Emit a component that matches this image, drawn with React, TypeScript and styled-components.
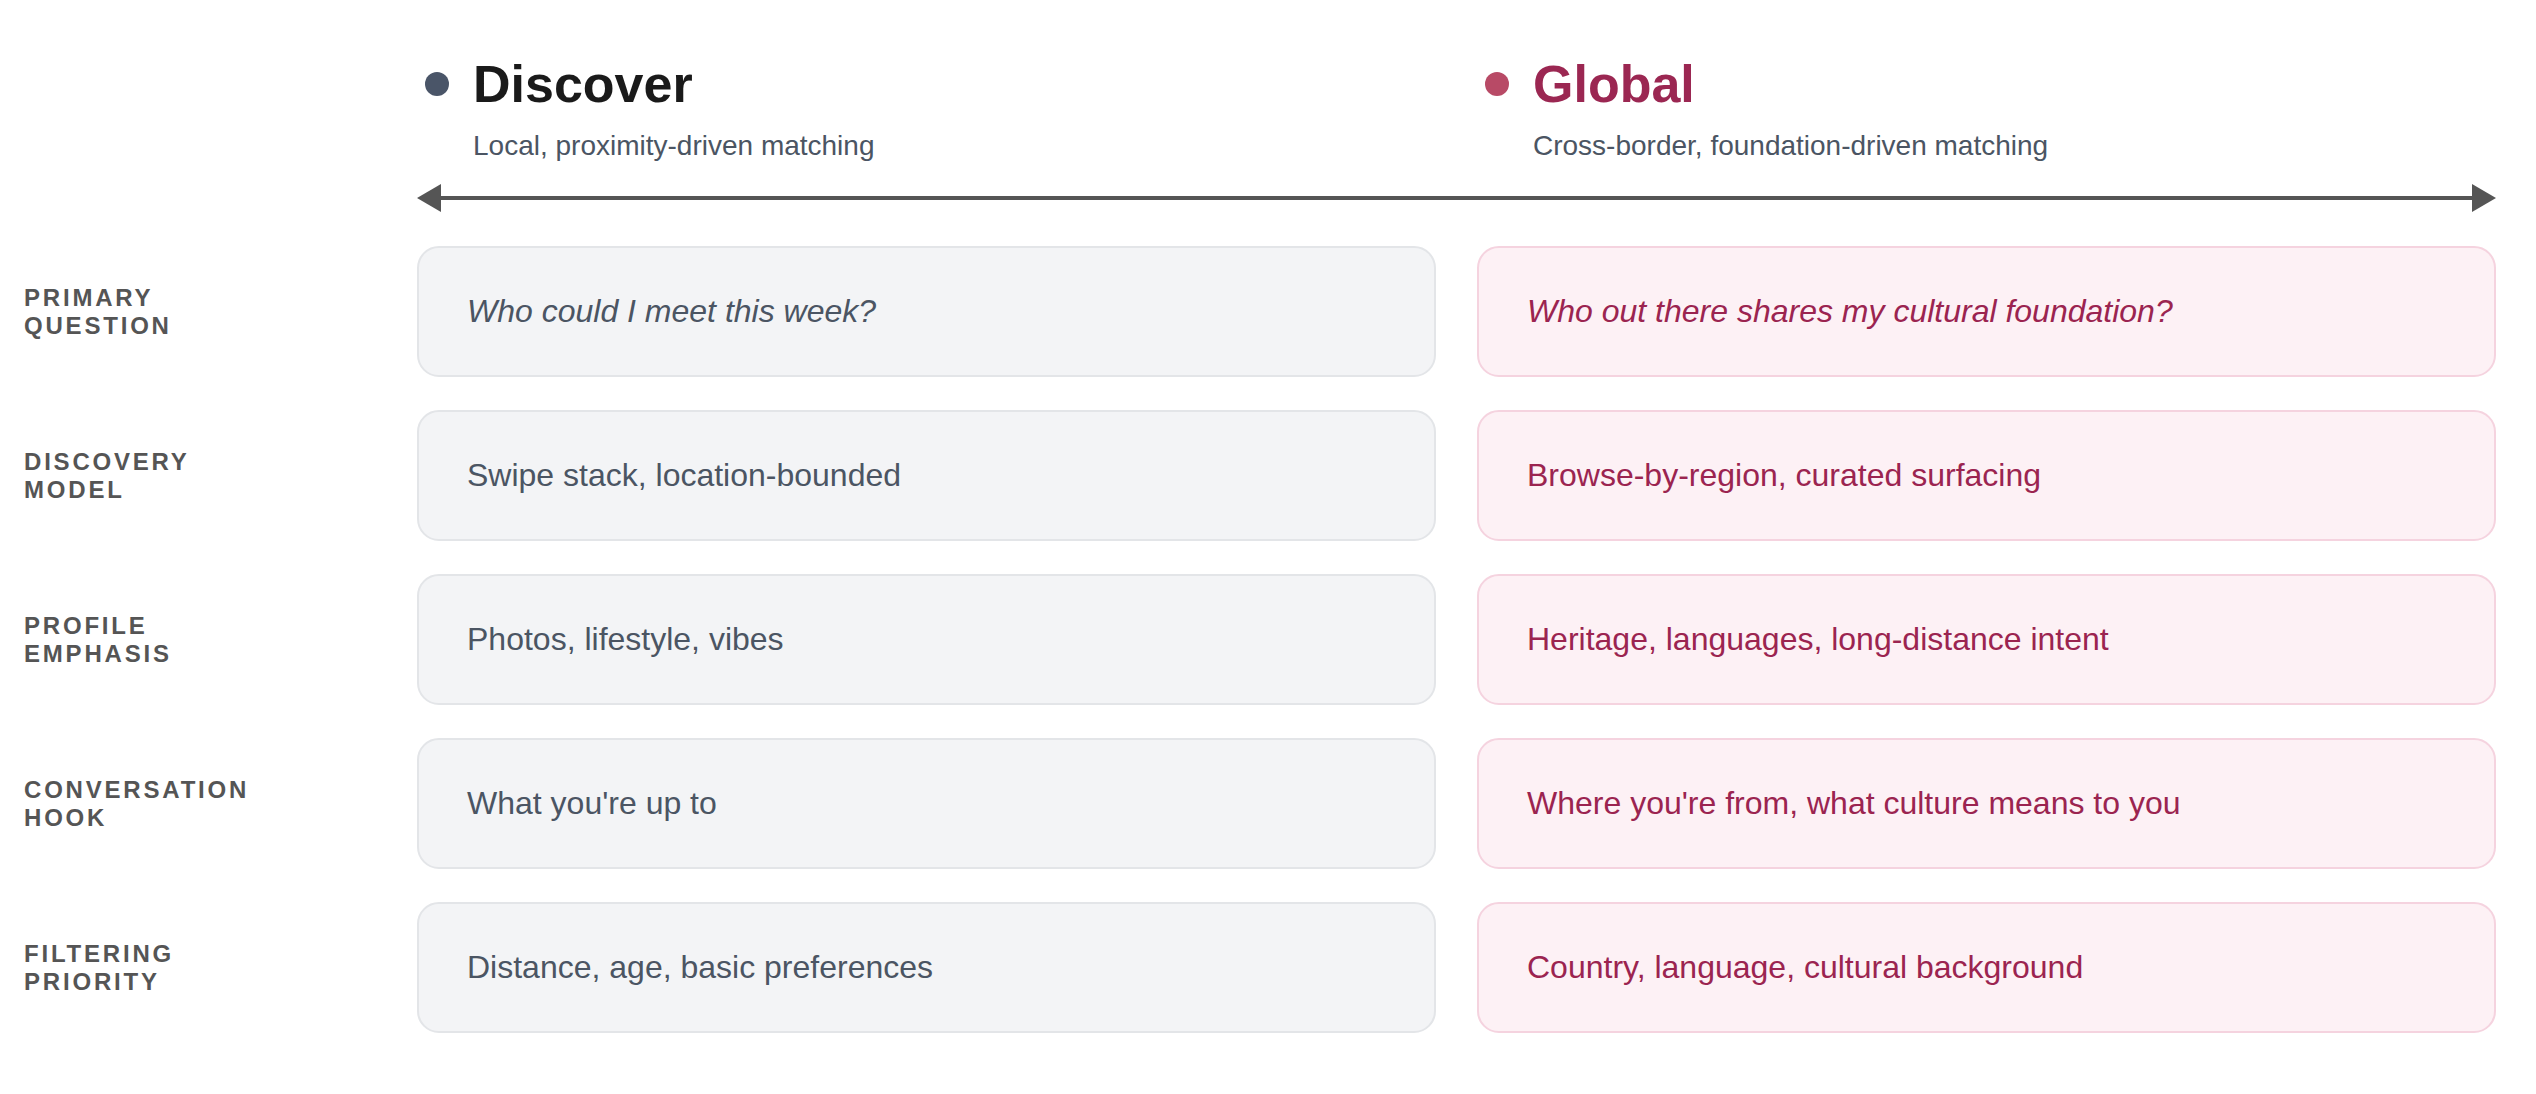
import React from "react";
import styled, { createGlobalStyle } from "styled-components";

const Global = createGlobalStyle`
  body { margin: 0; background: #fff; font-family: "Liberation Sans", Arial, sans-serif; }
`;

const Page = styled.div`
  padding: 46px 40px 40px 24px;
  display: grid;
  grid-template-columns: 352px 1fr 1fr;
  column-gap: 41px;
  row-gap: 33px;
`;

const Head = styled.div`
  padding-left: 8px;
`;
const TitleRow = styled.div`
  display: flex;
  align-items: center;
  gap: 24px;
`;
const Dot = styled.span<{ $c: string }>`
  width: 24px;
  height: 24px;
  border-radius: 50%;
  background: ${(p) => p.$c};
`;
const Title = styled.h1<{ $c: string }>`
  margin: 0;
  font-size: 52px;
  line-height: 76px;
  font-weight: 700;
  color: ${(p) => p.$c};
`;
const Sub = styled.div`
  margin: 8px 0 0 48px;
  font-size: 28px;
  color: #4b5563;
`;

const ArrowWrap = styled.div`
  grid-column: 2 / 4;
  height: 30px;
  margin: -12px 0 0;
`;

const Label = styled.div`
  display: flex;
  align-items: center;
  font-size: 24px;
  font-weight: 700;
  letter-spacing: 2.8px;
  line-height: 28px;
  color: #555;
  text-transform: uppercase;
`;

const Card = styled.div<{ $pink?: boolean; $italic?: boolean }>`
  height: 131px;
  box-sizing: border-box;
  border-radius: 22px;
  border: 2px solid ${(p) => (p.$pink ? "#f5d3df" : "#e3e5e8")};
  background: ${(p) => (p.$pink ? "#fdf1f5" : "#f3f4f6")};
  color: ${(p) => (p.$pink ? "#9b2450" : "#4b5563")};
  font-style: ${(p) => (p.$italic ? "italic" : "normal")};
  display: flex;
  align-items: center;
  padding: 0 48px;
  font-size: 32px;
`;

const rows = [
  ["Primary", "Question", "Who could I meet this week?", "Who out there shares my cultural foundation?", true],
  ["Discovery", "Model", "Swipe stack, location-bounded", "Browse-by-region, curated surfacing", false],
  ["Profile", "Emphasis", "Photos, lifestyle, vibes", "Heritage, languages, long-distance intent", false],
  ["Conversation", "Hook", "What you're up to", "Where you're from, what culture means to you", false],
  ["Filtering", "Priority", "Distance, age, basic preferences", "Country, language, cultural background", false],
] as const;

export default function App() {
  return (
    <>
      <Global />
      <Page>
        <div />
        <Head>
          <TitleRow>
            <Dot $c="#4a5568" />
            <Title $c="#1a1a1a">Discover</Title>
          </TitleRow>
          <Sub>Local, proximity-driven matching</Sub>
        </Head>
        <Head>
          <TitleRow>
            <Dot $c="#b84a66" />
            <Title $c="#9b2752">Global</Title>
          </TitleRow>
          <Sub>Cross-border, foundation-driven matching</Sub>
        </Head>
        <div />
        <ArrowWrap>
          <svg width="100%" height="30" viewBox="0 0 2080 30" preserveAspectRatio="none">
            <line x1="20" y1="15" x2="2060" y2="15" stroke="#555" strokeWidth="4" />
            <polygon points="0,15 24,1 24,29" fill="#555" />
            <polygon points="2080,15 2056,1 2056,29" fill="#555" />
          </svg>
        </ArrowWrap>
        {rows.map(([l1, l2, a, b, it]) => (
          <React.Fragment key={l1}>
            <Label>
              <span>
                {l1}
                <br />
                {l2}
              </span>
            </Label>
            <Card $italic={it}>{a}</Card>
            <Card $pink $italic={it}>{b}</Card>
          </React.Fragment>
        ))}
      </Page>
    </>
  );
}
